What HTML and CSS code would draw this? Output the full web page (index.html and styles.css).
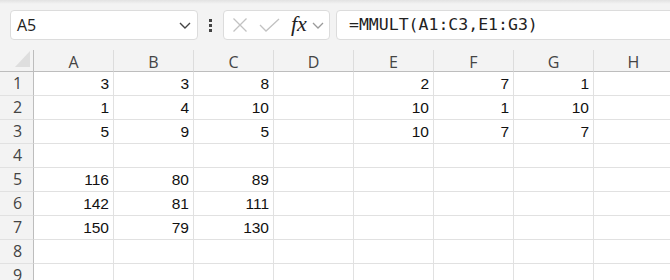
FILE: index.html
```html
<!DOCTYPE html>
<html>
<head lang="en">
    <meta charset="UTF-8">
    <title>MMULT</title>
    <link rel="stylesheet" href="styles.css">
</head>
<body>
<div id="bar">
    <div class="namebox">
        <span class="ref">A5</span>
        <svg class="chev" width="12" height="7" viewBox="0 0 12 7"><path d="M1 1 L6 6 L11 1" fill="none" stroke="#444" stroke-width="1.4"/></svg>
    </div>
    <div class="dots"><i></i><i></i><i></i></div>
    <div class="fxbox">
        <svg width="16" height="14" viewBox="0 0 16 14"><path d="M1.5 0.5 L14.5 13.5 M14.5 0.5 L1.5 13.5" stroke="#c2c2c2" stroke-width="1.3" fill="none"/></svg>
        <svg class="ok" width="21" height="14" viewBox="0 0 21 14"><path d="M1 7 L7 13 L20 1" stroke="#c2c2c2" stroke-width="1.3" fill="none"/></svg>
        <span class="fx">fx</span>
        <svg width="12" height="7" viewBox="0 0 12 7"><path d="M1 1 L6 6 L11 1" fill="none" stroke="#9a9a9a" stroke-width="1.3"/></svg>
    </div>
    <div class="formula">=MMULT(A1:C3,E1:G3)</div>
</div>
<div id="sheet">
    <div class="corner"><span class="tri"></span></div>
    <div class="col">A</div><div class="col">B</div><div class="col">C</div><div class="col">D</div>
    <div class="col">E</div><div class="col">F</div><div class="col">G</div><div class="col">H</div>

    <div class="row">1</div>
    <div class="c">3</div><div class="c">3</div><div class="c">8</div><div class="c"></div>
    <div class="c">2</div><div class="c">7</div><div class="c">1</div><div class="c"></div>

    <div class="row">2</div>
    <div class="c">1</div><div class="c">4</div><div class="c">10</div><div class="c"></div>
    <div class="c">10</div><div class="c">1</div><div class="c">10</div><div class="c"></div>

    <div class="row">3</div>
    <div class="c">5</div><div class="c">9</div><div class="c">5</div><div class="c"></div>
    <div class="c">10</div><div class="c">7</div><div class="c">7</div><div class="c"></div>

    <div class="row">4</div>
    <div class="c"></div><div class="c"></div><div class="c"></div><div class="c"></div>
    <div class="c"></div><div class="c"></div><div class="c"></div><div class="c"></div>

    <div class="row">5</div>
    <div class="c">116</div><div class="c">80</div><div class="c">89</div><div class="c"></div>
    <div class="c"></div><div class="c"></div><div class="c"></div><div class="c"></div>

    <div class="row">6</div>
    <div class="c">142</div><div class="c">81</div><div class="c">111</div><div class="c"></div>
    <div class="c"></div><div class="c"></div><div class="c"></div><div class="c"></div>

    <div class="row">7</div>
    <div class="c">150</div><div class="c">79</div><div class="c">130</div><div class="c"></div>
    <div class="c"></div><div class="c"></div><div class="c"></div><div class="c"></div>

    <div class="row">8</div>
    <div class="c"></div><div class="c"></div><div class="c"></div><div class="c"></div>
    <div class="c"></div><div class="c"></div><div class="c"></div><div class="c"></div>

    <div class="row">9</div>
    <div class="c"></div><div class="c"></div><div class="c"></div><div class="c"></div>
    <div class="c"></div><div class="c"></div><div class="c"></div><div class="c"></div>
</div>
</body>
</html>
```

FILE: styles.css
```css
*{
    margin: 0;
    padding: 0;
    box-sizing: border-box;
}
body{
    width: 670px;
    height: 280px;
    overflow: hidden;
    background: #fff;
    font-family: "Liberation Sans", Arial, sans-serif;
}
#bar{
    height: 50px;
    background: linear-gradient(#e2e2e2, #f3f3f3 4px);
    display: flex;
    align-items: flex-start;
    padding: 10px 0 0 10px;
    overflow: hidden;
}
.namebox{
    width: 188px;
    height: 30px;
    background: #fff;
    border: 1px solid #dcdcdc;
    border-radius: 4px;
    display: flex;
    align-items: center;
    justify-content: space-between;
    padding: 0 6px 0 6px;
}
.ref{
    font-family: "Open Sans", "Noto Sans", sans-serif;
    font-size: 16px;
    color: #222;
}
.dots{
    width: 25px;
    height: 30px;
    display: flex;
    flex-direction: column;
    align-items: center;
    justify-content: center;
    gap: 2px;
}
.dots i{
    width: 3px;
    height: 3px;
    background: #444;
}
.fxbox{
    width: 107px;
    height: 30px;
    background: #fff;
    border: 1px solid #dcdcdc;
    border-radius: 4px;
    display: flex;
    align-items: center;
    padding: 0 0 0 8px;
}
.fxbox .ok{
    margin-left: 11px;
}
.fx{
    font-family: "Liberation Serif", "DejaVu Serif", serif;
    font-style: italic;
    font-size: 22px;
    color: #222;
    margin: -3px 5px 0 11px;
}
.formula{
    flex: 1;
    height: 30px;
    margin-left: 6px;
    margin-right: -10px;
    background: #fff;
    border: 1px solid #dcdcdc;
    border-radius: 4px 0 0 4px;
    padding-left: 12px;
    font-family: "DejaVu Sans Mono", "Liberation Mono", monospace;
    font-size: 16.5px;
    line-height: 28px;
    color: #222;
}
#sheet{
    display: grid;
    grid-template-columns: 34px repeat(8, 80px);
    grid-template-rows: 22px repeat(9, 24px);
}
.corner{
    background: #f3f3f3;
    border-right: 1px solid #bdbdbd;
    border-bottom: 1px solid #bdbdbd;
    display: flex;
    justify-content: flex-end;
    align-items: flex-end;
    padding: 0 3px 4px 0;
}
.tri{
    width: 0;
    height: 0;
    border-left: 15px solid transparent;
    border-bottom: 16px solid #dedede;
}
.col{
    background: #f3f3f3;
    border-bottom: 1px solid #bdbdbd;
    border-right: 1px solid #dcdcdc;
    text-align: center;
    font-family: "Open Sans", "Noto Sans", sans-serif;
    font-size: 16px;
    line-height: 21px;
    color: #444;
    padding-top: 2px;
}
.row{
    background: #f3f3f3;
    border-right: 1px solid #bdbdbd;
    border-bottom: 1px solid #e1e1e1;
    text-align: center;
    font-family: "Open Sans", "Noto Sans", sans-serif;
    font-size: 16px;
    line-height: 23px;
    color: #444;
    padding-left: 2px;
}
.c{
    border-right: 1px solid #e1e1e1;
    border-bottom: 1px solid #e1e1e1;
    text-align: right;
    padding-right: 4px;
    font-size: 15.5px;
    line-height: 23px;
    color: #111;
}
```
